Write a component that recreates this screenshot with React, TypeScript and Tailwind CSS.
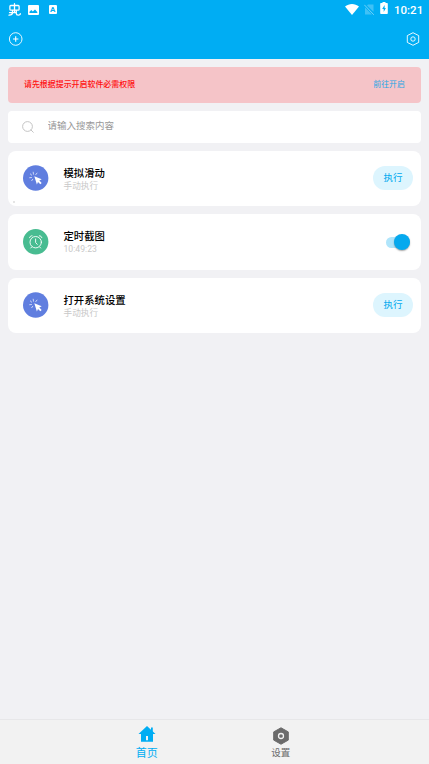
import { useState } from "react";
import clsx from "clsx";

type Task = {
  id: number;
  title: string;
  subtitle: string;
  type: "manual" | "timer";
};

const TASKS: Task[] = [
  { id: 1, title: "模拟滑动", subtitle: "手动执行", type: "manual" },
  { id: 2, title: "定时截图", subtitle: "10:49:23", type: "timer" },
  { id: 3, title: "打开系统设置", subtitle: "手动执行", type: "manual" },
];

const StatusBar = () => (
  <div className="flex h-[19px] items-center justify-between pl-2 pr-[7px] text-white">
    <div className="flex items-center">
      {/* bug logo of the debugger notification */}
      <svg
        viewBox="0 0 13 13"
        className="size-[13px]"
        fill="none"
        stroke="currentColor"
        strokeWidth="1.300"
        strokeLinecap="round"
        strokeLinejoin="round"
      >
        <path d="M2.800 2.500h7.400c.6 0 .9.300.9.900v2.800c0 .6-.3.900-.9.900H2.800c-.6 0-.9-.3-.9-.9V3.400c0-.6.3-.9.9-.9zM6.500 .700v8.800M4.500 7.200v2.300c0 1.500-1.200 2.600-3.500 2.700M1.500 9.600h6.700M8.300 7.200v3.200c0 2.200 4 2.300 4 .3" />
      </svg>
      <svg viewBox="0 0 11 10" className="ml-[7px] h-[10px] w-[11px]">
        <rect width="11" height="10" rx="1" fill="currentColor" />
        <path d="M1.500 8V6.700L3.300 5 4.800 6.500 7 4.500 9.300 6.900V8z" fill="#00adf3" />
      </svg>
      <span className="ml-[9.500px] h-[9px] w-[8.500px] rounded-[1px] bg-white text-center text-[8px] font-bold leading-[9px] text-[#00adf3]">
        A
      </span>
    </div>
    <div className="flex items-center">
      <svg viewBox="0 0 14 11" className="-mt-px h-[11px] w-[14px]">
        <path d="M0 2.600C4 -.8 10 -.8 14 2.600L7 11z" fill="currentColor" />
      </svg>
      <svg viewBox="0 0 10 11" className="ml-[5px] h-[11px] w-[10px]">
        <path
          d="M4 .5H9.500v7.300L3 1.400zM1 3.600l7 7H1z"
          fill="currentColor"
          fillOpacity=".25"
        />
        <path d="M.3 .8 9.800 10.800" stroke="currentColor" strokeOpacity=".45" />
      </svg>
      <svg viewBox="0 0 8 12" className="-mt-[3px] ml-[6.500px] h-3 w-2">
        <path
          d="M2.500 0h3v1H7a.8.8 0 0 1 .8.8v9.400a.8.8 0 0 1-.8.8H1a.8.8 0 0 1-.8-.8V1.800A.8.8 0 0 1 1 1h1.500z"
          fill="currentColor"
        />
        <path
          d="M4.600 3 2.200 6.900h1.500v3L5.900 5.900H4.600z"
          fill="#00adf3"
        />
      </svg>
      <span className="ml-1.5 w-[28px] whitespace-nowrap text-[11.500px] font-medium leading-[18px]">
        10:21
      </span>
    </div>
  </div>
);

const Header = () => (
  <header className="h-[59px] shrink-0 bg-[#00adf3]">
    <StatusBar />
    <div className="flex h-10 items-center justify-between pl-[8.500px] pr-[9px] text-white">
      <svg
        viewBox="0 0 14 14"
        className="size-[14px]"
        fill="none"
        stroke="currentColor"
      >
        <circle cx="6.700" cy="7" r="6.300" strokeWidth=".9" />
        <path d="M6.700 4.300v5.400M4 7h5.400" strokeWidth="1.100" />
      </svg>
      <svg
        viewBox="0 0 14 14"
        className="size-[14px]"
        fill="none"
        stroke="currentColor"
        strokeWidth=".9"
        strokeLinejoin="round"
      >
        <path d="M7 .7 12.700 3.600v6.800L7 13.300 1.300 10.400V3.600z" />
        <circle cx="7" cy="7" r="2.200" />
      </svg>
    </div>
  </header>
);

const ClickIcon = () => (
  <svg viewBox="0 0 26 26" className="size-[26px] shrink-0">
    <circle cx="12.700" cy="13" r="12.700" fill="#607edf" />
    <path
      d="M11.300 11.200 18.700 14.200 16.300 15.500 18.700 17.900 17.300 19.300 15 16.900 13.900 19.400z"
      fill="#fff"
    />
    <path
      d="M10.500 9.200 10.200 7.200M12.800 9.600l1.200-1.500M8.700 10.200 7.300 8.900M8.500 12.500l-1.800.2M9.700 14.300l-1 1.400"
      stroke="#fff"
      strokeOpacity=".75"
      strokeWidth=".9"
      strokeLinecap="round"
    />
  </svg>
);

const AlarmIcon = () => (
  <svg viewBox="0 0 26 26" className="size-[26px] shrink-0" fill="none">
    <circle cx="12.700" cy="12.800" r="12.700" fill="#48bc91" />
    <g stroke="#fff" strokeWidth=".9" strokeLinecap="round">
      <circle cx="12.700" cy="13.200" r="5.700" />
      <path d="M12.600 10v3.500l1.700 1.900M6.600 8.700c.2-1.200 1.200-2 2.500-1.900M18.800 8.700c-.2-1.200-1.200-2-2.500-1.900M8.700 18l-.9 1M16.700 18l.9 1" />
    </g>
  </svg>
);

const TaskCard = ({ task }: { task: Task }) => {
  const [enabled, setEnabled] = useState(true);

  return (
    <li className="relative flex h-[55.500px] items-center rounded-[8px] bg-white pl-[15px] pr-2">
      {task.type === "manual" ? <ClickIcon /> : <AlarmIcon />}
      <div
        className={clsx(
          "ml-[14.500px] grow",
          task.type === "manual" ? "pt-[1.500px]" : "pt-px",
        )}
      >
        <p className="text-[10.350px] font-medium leading-[13px] text-black">
          {task.title}
        </p>
        <p
          className={clsx(
            "text-[8.650px] leading-3 text-[#c8c8c8]",
            task.type === "timer" && "pt-[0.500px] tracking-[0.020px]",
          )}
        >
          {task.subtitle}
        </p>
      </div>
      {task.type === "manual" ? (
        <button className="h-6 w-10 rounded-full bg-[#ddf5fe] text-[9.500px] leading-6 text-[#00a9ee]">
          执行
        </button>
      ) : (
        <button
          role="switch"
          aria-checked={enabled}
          onClick={() => setEnabled(!enabled)}
          className={clsx(
            "mr-[3px] mt-px flex h-[11px] w-[24px] items-center rounded-full",
            enabled ? "justify-end bg-[#b0e5fb]" : "bg-gray-300",
          )}
        >
          <span
            className={clsx(
              "size-4 rounded-full shadow-[0_1px_1.500px_rgba(0,0,0,0.35)]",
              enabled ? "bg-[#06a9ee]" : "bg-white",
            )}
          />
        </button>
      )}
      {task.id === 1 && (
        <span className="absolute bottom-[3.500px] left-[5px] size-[2px] rounded-full bg-[#dcdcdc]" />
      )}
    </li>
  );
};

const TabBar = () => (
  <nav className="flex h-[45.500px] shrink-0 justify-center border-t border-[#e7e7e9] bg-[#f2f2f2] pr-[1.500px]">
    <a className="flex w-[134px] flex-col items-center text-[#00adf3]">
      <svg viewBox="0 0 18 16" className="mt-[6px] h-4 w-[18px]">
        <path
          d="M9 0l8.500 8H15V15.700H3V8H.5zM8 10v4.300h2V10z"
          fill="currentColor"
          fillRule="evenodd"
        />
        <path d="M13 1.500h1.800v4.500H13z" fill="currentColor" />
      </svg>
      <span className="mt-[4.500px] text-[11px] leading-4">首页</span>
    </a>
    <a className="flex w-[134px] flex-col items-center text-[#6b6b6b]">
      <svg viewBox="0 0 18 18" className="mt-[7.500px] size-[18px]">
        <path
          d="M9 .8 16.300 4.900V13.100L9 17.200 1.700 13.100V4.900z"
          fill="currentColor"
          stroke="currentColor"
          strokeLinejoin="round"
        />
        <circle
          cx="9"
          cy="9"
          r="2.500"
          fill="none"
          stroke="#f2f2f2"
          strokeWidth="1.300"
        />
      </svg>
      <span className="mt-px text-[9.500px] leading-[14px]">设置</span>
    </a>
  </nav>
);

export default function App() {
  return (
    <div className="flex h-[764px] w-full flex-col bg-[#f1f1f4] font-[Roboto,'Noto_Sans_CJK_SC',sans-serif]">
      <Header />
      <main className="flex grow flex-col gap-2 px-2 pt-2">
        <div className="flex h-[35.500px] items-center justify-between rounded-[4px] bg-[#f5c4c8] px-4 pt-px text-[7.950px]">
          <span className="font-medium text-[#ff1010]">
            请先根据提示开启软件必需权限
          </span>
          <button className="text-[#1ba6e6]">前往开启</button>
        </div>
        <label className="flex h-8 items-center rounded-[4px] bg-white pl-[14px]">
          <svg
            viewBox="0 0 12 12"
            className="size-3"
            fill="none"
            stroke="#bdbdbd"
            strokeWidth=".9"
          >
            <circle cx="5.500" cy="5.500" r="4.900" />
            <path d="M9 9l2.300 2.300" strokeLinecap="round" />
          </svg>
          <input
            className="ml-[13.500px] grow bg-transparent text-[9.500px] outline-none placeholder:text-[#999]"
            placeholder="请输入搜索内容"
          />
        </label>
        <ul className="flex flex-col gap-2">
          {TASKS.map((task) => (
            <TaskCard key={task.id} task={task} />
          ))}
        </ul>
      </main>
      <TabBar />
    </div>
  );
}
